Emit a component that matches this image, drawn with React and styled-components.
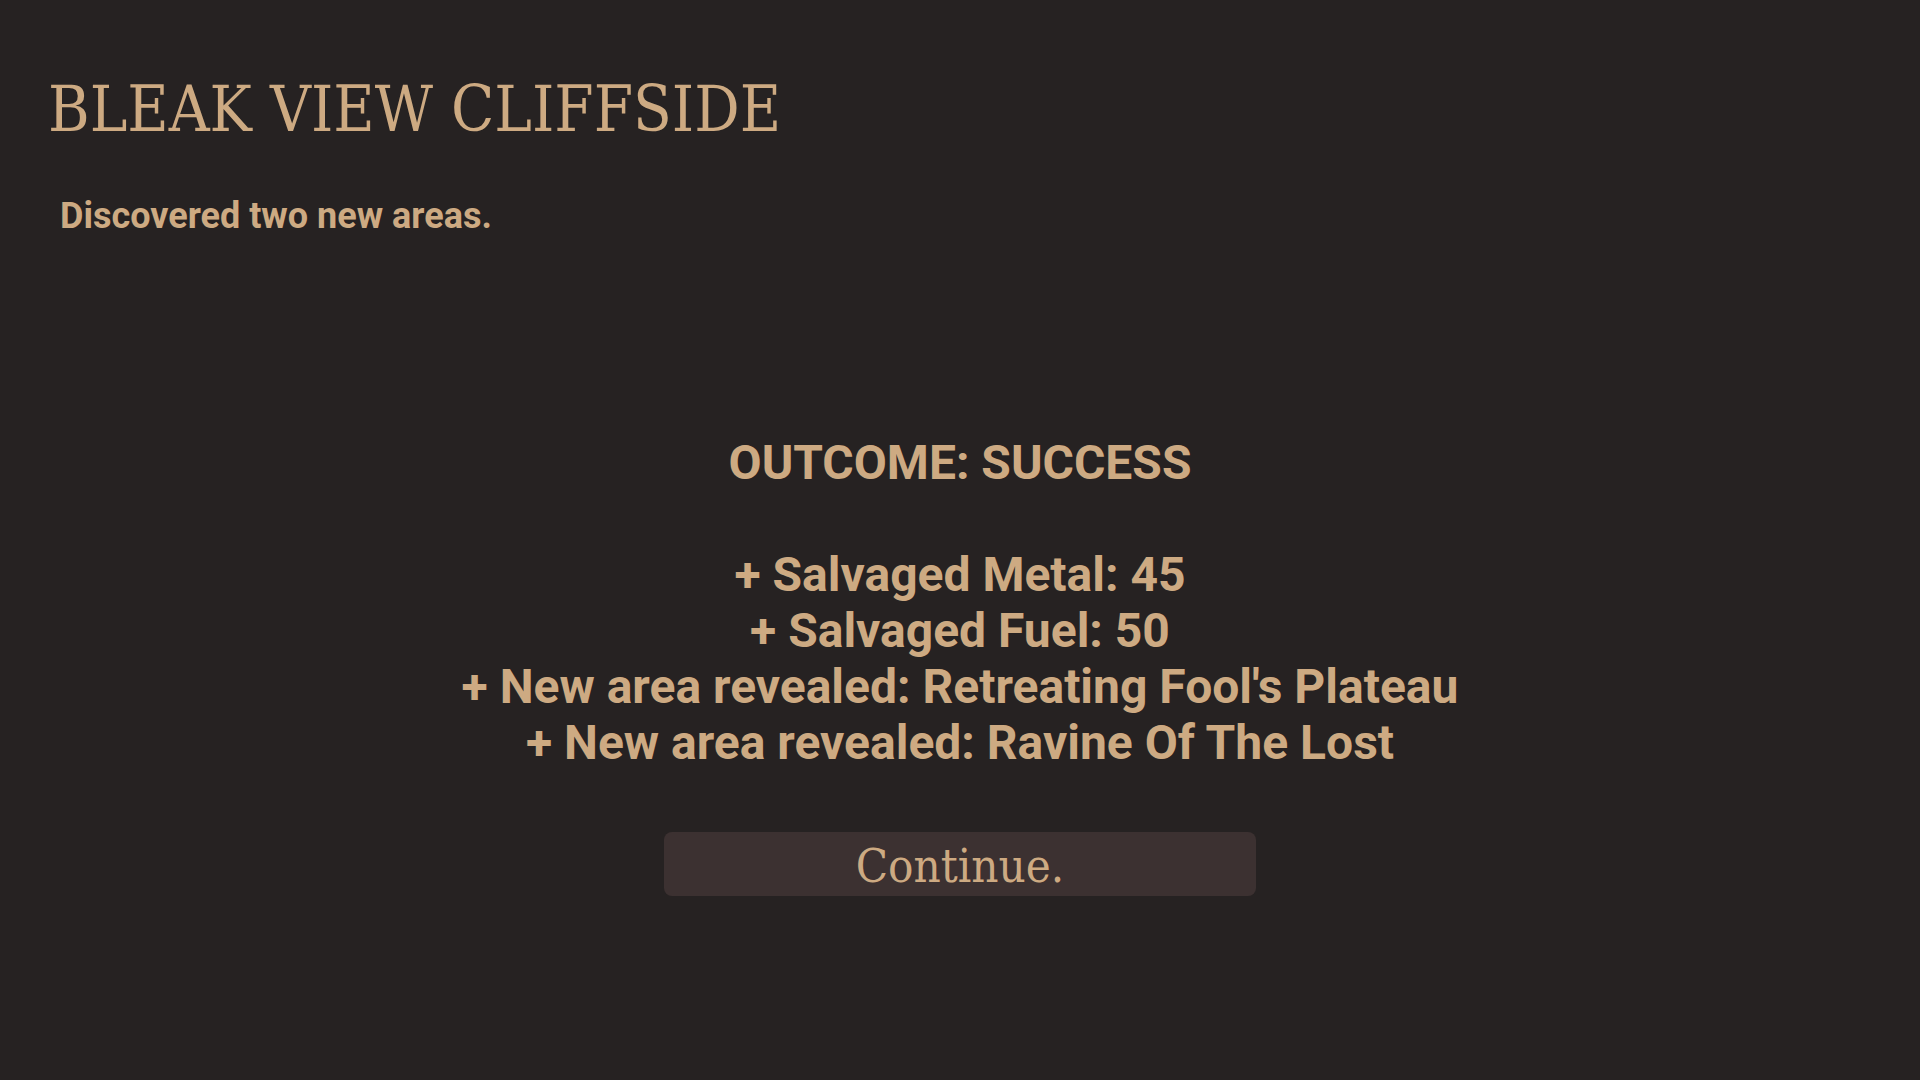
import React from "react";
import styled, { createGlobalStyle } from "styled-components";

const GlobalStyle = createGlobalStyle`
  * { box-sizing: border-box; }
  body { margin: 0; background: #262222; color: #cdaa82; font-family: Roboto, "Liberation Sans", sans-serif; font-weight: 700; }
`;

const displayFont = `"DejaVu Serif Condensed", "DejaVu Serif", serif`;

const Screen = styled.main`
  min-height: 100vh;
  display: flex;
  flex-direction: column;
  padding: 72px 48px 0;
`;

const Title = styled.h1`
  margin: 0;
  font-family: ${displayFont};
  font-size: 63px;
  font-weight: 400;
  line-height: 76px;
  text-transform: uppercase;
`;

const Summary = styled.p`
  margin: 44px 12px 0;
  font-size: 36px;
  line-height: 48px;
`;

const Result = styled.section`
  display: flex;
  flex-direction: column;
  align-items: center;
  margin-top: 195px;
  font-size: 48px;
  line-height: 56px;
`;

const Outcome = styled.h2`
  margin: 0 0 56px;
  font-size: inherit;
  font-weight: 700;
`;

const Rewards = styled.ul`
  list-style: none;
  margin: 0;
  padding: 0;
  text-align: center;
`;

const ContinueButton = styled.button`
  width: 592px;
  max-width: 100%;
  height: 64px;
  margin-top: 61px;
  padding: 4px 0 0;
  border: 0;
  border-radius: 8px;
  background: #3c3131;
  color: inherit;
  font-family: ${displayFont};
  font-size: 47px;
  line-height: 60px;
`;

const rewards = [
  "+ Salvaged Metal: 45",
  "+ Salvaged Fuel: 50",
  "+ New area revealed: Retreating Fool's Plateau",
  "+ New area revealed: Ravine Of The Lost",
];

export default function App() {
  return (
    <Screen>
      <GlobalStyle />
      <Title>Bleak View Cliffside</Title>
      <Summary>Discovered two new areas.</Summary>
      <Result>
        <Outcome>OUTCOME: SUCCESS</Outcome>
        <Rewards>
          {rewards.map((reward) => <li key={reward}>{reward}</li>)}
        </Rewards>
        <ContinueButton type="button">Continue.</ContinueButton>
      </Result>
    </Screen>
  );
}
